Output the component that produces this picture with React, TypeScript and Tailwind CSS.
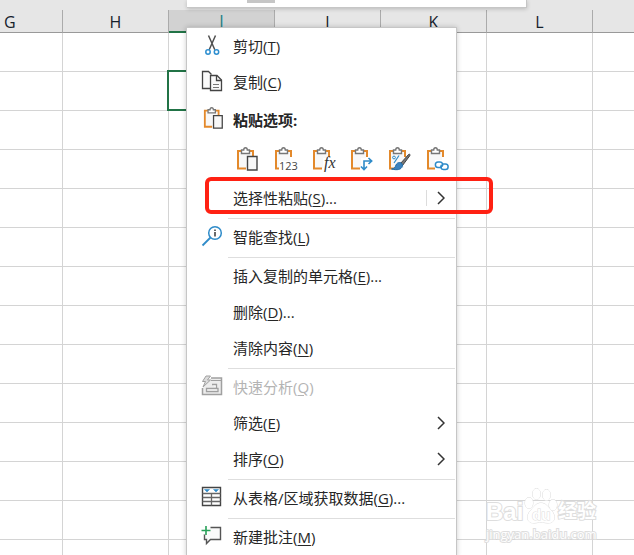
import type { ReactNode } from 'react';

const columns = ['G', 'H', 'I', 'J', 'K', 'L', ''];
const rows = Array.from({ length: 14 }, (_, i) => i + 1);

function Icon({ children }: { children: ReactNode }) {
    return (
        <svg viewBox="0 0 22 22" className="block w-[22px] h-[22px] overflow-visible" fill="none" aria-hidden="true">
            {children}
        </svg>
    );
}

function CutIcon() {
    return (
        <Icon>
            <path d="M7.5 .5l6.3 14.2M14.5 .5L8.2 14.7" stroke="#505050" strokeWidth="1.5" />
            <circle cx="7" cy="17" r="2.2" stroke="#2e8fd0" strokeWidth="1.5" />
            <circle cx="15.500" cy="17" r="2.2" stroke="#2e8fd0" strokeWidth="1.5" />
        </Icon>
    );
}

function CopyIcon() {
    return (
        <Icon>
            <path d="M9 17.5H1.5V.5h6l3 3" fill="#fafafa" stroke="#444" strokeWidth="1.3" />
            <path d="M9.5 4.500H16l4.500 4.500v10.500h-11z" fill="#fafafa" stroke="#444" strokeWidth="1.3" />
            <path d="M15.5 4.500v5h5" stroke="#444" strokeWidth="1.3" />
            <path d="M12 13.5h6M12 16.5h6" stroke="#777" />
        </Icon>
    );
}

function Clipboard({ children, className }: { children: ReactNode; className: string }) {
    return (
        <svg viewBox="0 0 24 24" className={className} fill="none" aria-hidden="true">
            <path d="M3 4h13v17H3z" fill="#f8f8f8" />
            <path d="M6 4H2v17.5h8M13 4h4v6" stroke="#e3892b" strokeWidth="2" />
            <path d="M5.5 6.5V3h2.2c0-1 .6-2.2 1.8-2.2S11.3 2 11.3 3h2.2v3.5z" fill="#fff" stroke="#777" strokeWidth="1.4" />
            {children}
        </svg>
    );
}

const page = <path d="M11.5 9.5H21V23h-9.5z" fill="#f8f8f8" stroke="#444" strokeWidth="1.4" />;

const pasteOptions = [
    { label: '粘贴', art: page },
    {
        label: '值',
        art: (
            <>
                <path d="M5 14h18v10H5z" fill="#fff" />
                <text x="5" y="23" className="text-[11px] font-['Open_Sans',sans-serif]" fill="#444">123</text>
            </>
        ),
    },
    {
        label: '公式',
        art: (
            <>
                <path d="M11 11h12v13H11z" fill="#fff" />
                <text x="12" y="21" className="text-[16px] italic font-['Liberation_Serif',serif]" fill="#333">fx</text>
            </>
        ),
    },
    {
        label: '转置',
        art: (
            <>
                <path d="M11 11h12v13H11z" fill="#fff" />
                <path d="M21.5 14H14v8.5M18.5 11l3.2 3-3.2 3M11 19.5l3 3.2 3-3.2" stroke="#2e8bc9" strokeWidth="1.6" />
            </>
        ),
    },
    {
        label: '格式',
        art: (
            <>
                <circle cx="6" cy="10.5" r="1.4" stroke="#2e8bc9" />
                <path d="M11 8.5L6 16" stroke="#2e8bc9" strokeWidth="1.2" />
                <path d="M12.5 16.5l8-9c1-.8 2 0 1.300 1.200l-7.300 9.800z" fill="#777" stroke="#444" />
                <path d="M11.5 15.5c2 0 3.5 2 2.8 4-1 3-5 4-10.8 2.5 3-.5 3.5-1.5 4.5-4 .6-1.600 2-2.500 3.500-2.500z" fill="#3b82bd" stroke="#1f6ca8" />
            </>
        ),
    },
    {
        label: '链接',
        art: (
            <>
                <path d="M9 13h14v11H9z" fill="#fff" />
                <path d="M16 20.5h-4c-3.5 0-3.5-5.5 0-5.5h2c2.5 0 3.5 2.5 2 4.500M15.500 17h4c3.500 0 3.500 5.500 0 5.500h-2c-2.500 0-3.500-2.500-2-4.500" stroke="#2e8bc9" strokeWidth="1.5" />
            </>
        ),
    },
];

function SearchIcon() {
    return (
        <Icon>
            <circle cx="14" cy="7" r="6.3" stroke="#2e8bc9" strokeWidth="1.5" />
            <path d="M9.5 11.5l-8 8" stroke="#2e8bc9" strokeWidth="1.8" />
            <path d="M14 6v4.500M14 3.500V5" stroke="#444" strokeWidth="1.6" />
        </Icon>
    );
}

function AnalysisIcon() {
    return (
        <Icon>
            <path d="M10 2h10.5v16.5h-19V12" fill="#ededed" stroke="#a0a0a0" strokeWidth="1.5" />
            <path d="M10 4.5h10" stroke="#a0a0a0" />
            <path d="M11 8.5h4.5V12M5.5 12.5H17v3H5.5z" fill="#fff" stroke="#a0a0a0" strokeWidth="1.3" />
            <path d="M5 0L1.5 5.5h3L2 11l7.5-7h-3l3-4z" fill="#dcdcdc" stroke="#a0a0a0" />
        </Icon>
    );
}

function TableIcon() {
    return (
        <Icon>
            <path d="M1.5.5h18v18h-18z" fill="#fff" stroke="#444" strokeWidth="1.4" />
            <path d="M1.5 6.5h18M1.5 10.5h18M1.5 14.5h18M10.5 6.5v12" stroke="#666" strokeWidth="1.3" />
            <path d="M3.5 2.500h5L6 5zM12.5 2.5h5L15 5z" fill="#2e8bc9" stroke="#2e8bc9" strokeWidth=".5" />
        </Icon>
    );
}

function CommentIcon() {
    return (
        <Icon>
            <path d="M9.5 1.5h10v12h-10l-4 4v-4h-2V8" fill="#fafafa" stroke="#555" strokeWidth="1.4" />
            <path d="M1 4.5h8M5 .5v8" stroke="#fff" strokeWidth="4" />
            <path d="M.5 4.5h9M5 0v9" stroke="#27a058" strokeWidth="1.6" />
        </Icon>
    );
}

function Chevron() {
    return (
        <svg viewBox="0 0 8 14" className="w-2 h-3.5" fill="none" aria-hidden="true">
            <path d="M1 1l6 6-6 6" stroke="#333" strokeWidth="1.5" />
        </svg>
    );
}

type ItemProps = {
    text: string;
    mnemonic: string;
    more?: boolean;
    icon?: ReactNode;
    submenu?: boolean;
    split?: boolean;
    disabled?: boolean;
};

function Item({ text, mnemonic, more, icon, submenu, split, disabled }: ItemProps) {
    return (
        <button
            type="button"
            role="menuitem"
            disabled={disabled}
            className="flex w-full h-9 items-center pl-3.5 pr-[11px] pb-0.5 text-left text-[#262626] disabled:text-[#b4b4b4]"
        >
            <span className="w-8 shrink-0">{icon}</span>
            <span className="flex-1 whitespace-nowrap">
                {text}(<span className="underline underline-offset-2">{mnemonic}</span>){more && '...'}
            </span>
            {split && <span className="h-4 w-px mr-2.5 bg-[#dcdcdc]" />}
            {submenu && <Chevron />}
        </button>
    );
}

function Separator() {
    return <div role="separator" className="h-px my-px ml-[41px] mr-px bg-[#dedede]" />;
}

function Sheet() {
    return (
        <table className="w-full table-fixed border-separate border-spacing-0">
            <colgroup>
                <col className="w-[63px]" />
                <col className="w-[106px]" />
                <col className="w-[106px]" />
                <col className="w-[106px]" />
                <col className="w-[106px]" />
                <col className="w-[106px]" />
                <col />
            </colgroup>
            <thead>
                <tr>
                    {columns.map((name, i) => (
                        <th
                            key={i}
                            scope="col"
                            className={
                                name === 'I'
                                    ? 'h-[23px] p-0 pt-px leading-5 font-normal text-base text-[#217e86] bg-[#d2d2d2] border-r border-r-[#ababab] border-b-2 border-b-[#217346]'
                                    : name === 'G'
                                      ? 'h-[23px] p-0 pt-0.5 pl-1 leading-5 text-left font-normal text-base text-[#15202b] border-r border-r-[#ababab] border-b border-b-[#999]'
                                      : 'h-[23px] p-0 pt-0.5 leading-5 font-normal text-base text-[#15202b] border-r border-r-[#ababab] border-b border-b-[#999] last:border-r-0'
                            }
                        >
                            {name}
                        </th>
                    ))}
                </tr>
            </thead>
            <tbody>
                {rows.map((row) => (
                    <tr key={row}>
                        {columns.map((name, i) => (
                            <td key={i} className="relative h-[39px] p-0 bg-white border-r border-b border-[#d4d4d4] last:border-r-0">
                                {row === 2 && name === 'I' && <div className="absolute -inset-x-0.5 -top-0.5 -bottom-px border-2 border-[#217346]" />}
                            </td>
                        ))}
                    </tr>
                ))}
            </tbody>
        </table>
    );
}

function ContextMenu() {
    return (
        <div
            role="menu"
            className="absolute left-[186px] top-[27px] w-[271px] pt-px border border-[#c6c6c6] bg-white text-[15px] leading-5 shadow-[0_0_5px_rgba(0,0,0,0.2)]"
        >
            <Item text="剪切" mnemonic="T" icon={<CutIcon />} />
            <Item text="复制" mnemonic="C" icon={<CopyIcon />} />
            <div className="flex h-9 items-center pl-3.5 pt-0.5 font-bold text-[#262626]">
                <span className="w-8 shrink-0 pb-1 pl-0.5">
                    <Clipboard className="block w-[22px] h-[22px]">{page}</Clipboard>
                </span>
                粘贴选项:
            </div>
            <div className="flex h-11 items-center gap-3.5 pl-[49px]">
                {pasteOptions.map((option) => (
                    <button key={option.label} type="button" role="menuitem" aria-label={option.label}>
                        <Clipboard className="block w-6 h-6 overflow-visible">{option.art}</Clipboard>
                    </button>
                ))}
            </div>
            <div className="relative">
                <Item text="选择性粘贴" mnemonic="S" more submenu split />
                <div className="absolute -top-1 left-[18px] w-[288px] h-[37px] rounded-md border-4 border-[#ff2113] pointer-events-none" />
            </div>
            <Separator />
            <Item text="智能查找" mnemonic="L" icon={<SearchIcon />} />
            <Separator />
            <Item text="插入复制的单元格" mnemonic="E" more />
            <Item text="删除" mnemonic="D" more />
            <Item text="清除内容" mnemonic="N" />
            <Separator />
            <Item text="快速分析" mnemonic="Q" icon={<AnalysisIcon />} disabled />
            <Item text="筛选" mnemonic="E" submenu />
            <Item text="排序" mnemonic="O" submenu />
            <Separator />
            <Item text="从表格/区域获取数据" mnemonic="G" more icon={<TableIcon />} />
            <Separator />
            <Item text="新建批注" mnemonic="M" icon={<CommentIcon />} />
        </div>
    );
}

function Watermark() {
    return (
        <div className="absolute left-[486px] top-[484px] text-white font-bold [-webkit-text-stroke:2px_#dedede] [paint-order:stroke]">
            <div className="flex h-[42px] items-end font-['Liberation_Sans','Noto_Sans_CJK_SC',sans-serif]">
                <span className="w-[38px] text-2xl leading-7">Bai</span>
                <svg viewBox="0 0 34 40" className="w-[34px] h-10" fill="#fff" stroke="#dcdcdc" aria-hidden="true">
                    <ellipse cx="5" cy="17" rx="4" ry="5.5" />
                    <ellipse cx="12.5" cy="8" rx="4" ry="5.5" />
                    <ellipse cx="22.5" cy="9" rx="4" ry="5.5" />
                    <ellipse cx="29" cy="19" rx="4" ry="5.5" />
                    <path d="M17 17c5 0 7 4 10 7 5 5 5 13-3 13-3 0-5-1-7-1s-4 1-7 1c-8 0-8-8-3-13 3-3 5-7 10-7z" />
                    <text x="8" y="34" className="text-[15px] [-webkit-text-stroke:1px_#d4d4d4]">du</text>
                </svg>
                <span className="text-[19px] leading-7">经验</span>
            </div>
            <div className="text-[13px] leading-4 font-medium font-['Open_Sans',sans-serif]">jingyan.baidu.com</div>
        </div>
    );
}

export default function App() {
    return (
        <main className="relative h-screen overflow-hidden bg-[#e6e6e6] font-['Open_Sans','Noto_Sans_CJK_SC',sans-serif]">
            <div className="h-2.5 pl-[187px]">
                <div className="relative w-[340px] h-2 pl-[60px] bg-white border-r border-b border-[#c6c6c6] shadow-[0_1px_4px_rgba(0,0,0,0.2)]">
                    <div className="w-7 h-[3px] bg-[#c6c6c6]" />
                </div>
            </div>
            <Sheet />
            <ContextMenu />
            <Watermark />
        </main>
    );
}
